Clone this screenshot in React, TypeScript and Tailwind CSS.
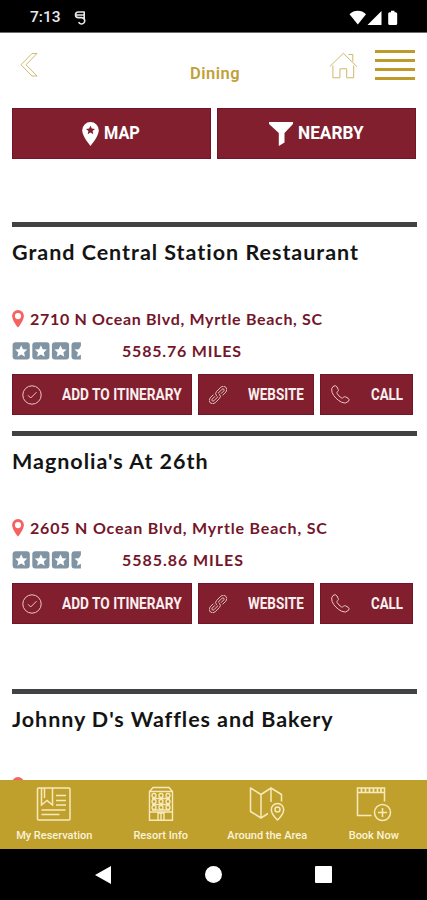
import React from 'react';

interface Place {
    name: string;
    address?: string;
    distance?: string;
    height: string;
    nameTracking: string;
    addressTracking?: string;
    distanceTracking?: string;
}

const places: Place[] = [
    {
        name: 'Grand Central Station Restaurant',
        address: '2710 N Ocean Blvd, Myrtle Beach, SC',
        distance: '5585.76 MILES',
        height: 'h-[209px]',
        nameTracking: 'tracking-[0.98px]',
        addressTracking: 'tracking-[0.68px]',
        distanceTracking: 'tracking-[0.8px]',
    },
    {
        name: "Magnolia's At 26th",
        address: '2605 N Ocean Blvd, Myrtle Beach, SC',
        distance: '5585.86 MILES',
        height: 'h-[258px]',
        nameTracking: 'tracking-[0.98px]',
        addressTracking: 'tracking-[0.82px]',
        distanceTracking: 'tracking-[0.95px]',
    },
    {
        name: "Johnny D's Waffles and Bakery",
        height: 'h-[209px]',
        nameTracking: 'tracking-[0.93px]',
    },
];

const StatusBar: React.FC = () => (
    <div className="flex h-[33px] shrink-0 items-center justify-between border-b border-[#6b6b6b] bg-black pt-[3px] pr-[29px] pl-[30px] text-[#e8e8e8]">
        <div className="flex items-center gap-[13px]">
            <span className="w-[31px] font-['Roboto',sans-serif] text-[15.5px] leading-none font-medium whitespace-nowrap">7:13</span>
            <svg width="12" height="14" viewBox="0 0 12 14" fill="none" stroke="currentColor" strokeWidth="1.6">
                <path d="M10.800 1H4.300a2.800 2.800 0 0 0 0 5.600h3.500a3.200 3.200 0 1 1-3.200 4.600M1 4h9.800M10.200 1v7M1.800 2v4" />
            </svg>
        </div>
        <svg width="50" height="16" viewBox="0 0 50 16" fill="#fff">
            <path d="M1.500 4.2C6-.4 13.500-.4 18 4.200L9.800 14.500z" />
            <path d="M33.500 1v14h-14z" />
            <path d="M43 .8h3.500v1.400h1.200q1.500 0 1.500 1.500v9.800q0 1.500-1.500 1.500h-6q-1.500 0-1.500-1.500V3.700q0-1.500 1.500-1.500H43z" />
        </svg>
    </div>
);

const Header: React.FC = () => (
    <header className="flex h-[75px] shrink-0 items-start pt-[17px] pl-[20px]">
        <svg className="mt-[2px] shrink-0" width="19" height="26" viewBox="0 0 19 26" fill="none" stroke="#cdbb74" strokeWidth="1">
            <path d="M12 1.500h5L6 12.800 17 24h-5L1 12.800z" />
        </svg>
        <h1 className="mt-[15px] ml-[151px] w-[139px] font-['Roboto',sans-serif] text-[16.5px] leading-[18px] font-semibold tracking-[0.5px] whitespace-nowrap text-[#c1a03a]">Dining</h1>
        <div className="flex gap-[17px]">
            <svg className="mt-[2px]" width="29" height="27" viewBox="0 0 29 27" fill="none" stroke="#cdb86c" strokeWidth="1">
                <path d="M.8 14.500 14.300 1.300l13.500 13.200" />
                <path d="M3.900 13.500v12.300h7v-9h6.800v9h7V13.500M19.500 2.500h4.300v7" />
            </svg>
            <div className="flex w-[40px] flex-col gap-[6px]">
                <span className="h-[3px] bg-[#bd9b2b]" />
                <span className="h-[3px] bg-[#bd9b2b]" />
                <span className="h-[3px] bg-[#bd9b2b]" />
                <span className="h-[3px] bg-[#bd9b2b]" />
            </div>
        </div>
    </header>
);

const FilterButtons: React.FC = () => (
    <div className="flex h-[51px] shrink-0 gap-[6px] pr-[11px] pl-[12px] font-['Roboto',sans-serif] text-[18.5px] font-bold text-white">
        <button className="flex w-[199px] items-center border border-[#72152a] bg-[#811f2f] pl-[69px]">
            <svg className="shrink-0" width="17" height="24" viewBox="0 0 17 24" fill="#fff">
                <path d="M8.500 0A8.300 8.300 0 0 0 .2 8.300C.2 14.500 8.500 24 8.500 24s8.300-9.500 8.300-15.700A8.300 8.300 0 0 0 8.500 0z" />
                <path fill="#811f2f" d="m8.500 3.700 1.300 2.900 3.200.3-2.400 2.200.7 3.100-2.800-1.600-2.800 1.600.7-3.100L4 6.900l3.200-.3z" />
            </svg>
            <span className="mt-px ml-[5px] origin-left scale-x-[0.88] whitespace-nowrap">MAP</span>
        </button>
        <button className="flex w-[199px] items-center border border-[#72152a] bg-[#811f2f] pl-[51px]">
            <svg className="shrink-0" width="24" height="24" viewBox="0 0 24 24" fill="#fff">
                <path d="M0 0h24v2l-8.500 9v9.500L9.800 24V11L0 2z" />
            </svg>
            <span className="mt-px ml-[5px] origin-left scale-x-[0.93] whitespace-nowrap">NEARBY</span>
        </button>
    </div>
);

const Pin: React.FC = () => (
    <svg className="shrink-0" width="12" height="18" viewBox="0 0 12 18" fill="#f5625f">
        <path fillRule="evenodd" d="M6 0a5.900 5.900 0 0 0-5.900 5.900C.1 10.500 6 17.500 6 17.500s5.900-7 5.900-11.600A5.900 5.900 0 0 0 6 0zm0 3a3 3 0 1 1 0 6.200A3 3 0 0 1 6 3z" />
    </svg>
);

const Rating: React.FC = () => (
    <svg className="shrink-0" width="70" height="18" viewBox="0 0 70 18">
        {[0, 19.7, 39.3].map((x) => (
            <g key={x} transform={`translate(${x} 0)`}>
                <rect x=".6" y=".3" width="17.200" height="17.200" rx="3" fill="#8194a4" />
                <path fill="#fff" d="m9.200 3.200 1.800 4 4.300.4-3.200 2.900.9 4.200-3.800-2.200-3.800 2.200.9-4.200-3.200-2.900 4.300-.4z" />
            </g>
        ))}
        <path fill="#8194a4" d="M62.500.3h6.400V4l-2 3.200-4.500.4 3.500 3-1 4.200 4-2v4.700h-6.400a3 3 0 0 1-3-3V3.300a3 3 0 0 1 3-3z" />
    </svg>
);

const CheckIcon: React.FC = () => (
    <svg className="shrink-0" width="20" height="20" viewBox="0 0 20 20" fill="none" stroke="#e9c9c4" strokeWidth="1">
        <circle cx="10" cy="10" r="9.200" />
        <path d="m6 10.300 2.700 2.700 5.800-5.800" />
    </svg>
);

const LinkIcon: React.FC = () => (
    <svg className="shrink-0" width="18" height="18" viewBox="0 0 18 18" fill="none" stroke="#e9c9c4" strokeWidth=".9">
        <g transform="rotate(-45 9 9)">
            <path d="M7.500 9.500V8.500a3 3 0 0 1 3-3h6a3.300 3.300 0 0 1 0 7h-4.500" />
            <path d="M10.500 8.500v1a3 3 0 0 1-3 3h-6a3.300 3.300 0 0 1 0-7H6" />
            <path d="M12 10.200h4a1.200 1.200 0 0 0 0-2.400h-5.500M6 7.800H2a1.200 1.200 0 0 0 0 2.400h5.500" />
        </g>
    </svg>
);

const PhoneIcon: React.FC = () => (
    <svg className="shrink-0" width="19" height="19" viewBox="0 0 19 19" fill="none" stroke="#e9c9c4" strokeWidth="1" strokeLinejoin="round">
        <path d="M2 1.500Q4.500-.5 6 2l1.200 2.400q.6 1.400-.7 2.300-1 .8-.4 1.800 1.500 2.700 4.400 4.400 1 .6 1.800-.5.9-1.200 2.300-.5l2.500 1.300q2 1.500.3 3.200-2.700 2.900-6.700.9Q3.700 13.600 1.100 7.500-.3 3.300 2 1.500z" />
    </svg>
);

const PlaceCard: React.FC<{ place: Place }> = ({ place }) => (
    <article className={`${place.height} flex shrink-0 flex-col`}>
        <div className="h-[5px] w-[405px] shrink-0 bg-[#414243]" />
        <h2 className={`${place.nameTracking} mt-[12px] h-[26px] shrink-0 text-[21.5px] leading-[26px] whitespace-nowrap text-[#141414]`}>{place.name}</h2>
        <div className="mt-[45px] flex h-[18px] shrink-0 items-start">
            <Pin />
            <span className={`${place.addressTracking ?? ''} ml-[6px] text-[16px] leading-[18px] whitespace-nowrap text-[#74162a]`}>{place.address}</span>
        </div>
        {place.distance && (
            <>
                <div className="mt-[14px] flex h-[18px] shrink-0 items-center">
                    <Rating />
                    <span className={`${place.distanceTracking ?? ''} ml-[40px] text-[16px] leading-[18px] whitespace-nowrap text-[#74162a]`}>{place.distance}</span>
                </div>
                <div className="mt-[14px] flex h-[41px] shrink-0 gap-[6px] font-['Roboto',sans-serif] text-[16px] font-bold text-[#fbeeee]">
                    <button className="flex w-[180px] items-center border border-[#72152a] bg-[#811f2f] pl-[9px]">
                        <CheckIcon />
                        <span className="ml-[20px] origin-left scale-x-[0.855] whitespace-nowrap">ADD TO ITINERARY</span>
                    </button>
                    <button className="flex w-[116px] items-center border border-[#72152a] bg-[#811f2f] pl-[10px]">
                        <LinkIcon />
                        <span className="ml-[21px] origin-left scale-x-[0.84] whitespace-nowrap">WEBSITE</span>
                    </button>
                    <button className="flex w-[93px] items-center border border-[#72152a] bg-[#811f2f] pl-[10px]">
                        <PhoneIcon />
                        <span className="ml-[21px] origin-left scale-x-[0.83] whitespace-nowrap">CALL</span>
                    </button>
                </div>
            </>
        )}
    </article>
);

const ReservationIcon: React.FC = () => (
    <svg width="36" height="36" viewBox="0 0 36 36" fill="none" stroke="#f7e9ba" strokeWidth="1.500">
        <rect x="1.500" y="2" width="32.500" height="32" rx="1" />
        <path d="M5.500 2v17l5.500-4.500 5.500 4.500V2M8.500 2v10M20 9.500h10M20 14.500h10M20 19h10M5.500 24h24M5.500 28.500h18" />
    </svg>
);

const ResortIcon: React.FC = () => (
    <svg width="26" height="36" viewBox="0 0 26 36" fill="none" stroke="#f7e9ba" strokeWidth="1.400">
        <path d="M1.500 34.300V5.500L5 1.500h16l3.500 4v28.800zM1.500 5.500h23M1.500 26h23M10 34v-7h6v7M13 27v7" />
        {[9.5, 15.5, 21.5].map((y) => (
            <g key={y}>
                <circle cx="6" cy={y} r="2" />
                <circle cx="13" cy={y} r="2" />
                <circle cx="20" cy={y} r="2" />
            </g>
        ))}
        <path d="M4 12.500h18M4 18.500h18M4 24h18" />
    </svg>
);

const AreaIcon: React.FC = () => (
    <svg width="36" height="36" viewBox="0 0 36 36" fill="none" stroke="#f7e9ba" strokeWidth="1.500" strokeLinejoin="round">
        <path d="M19 27.500 12 32 1.500 25.500V2L12 8.500 22 2l10.500 6.500v7M12 8.500V32M22 2v14" />
        <path d="M28.500 34s-6.200-6-6.200-10.300a6.200 6.200 0 0 1 12.400 0C34.700 28 28.500 34 28.500 34z" />
        <circle cx="28.500" cy="23.500" r="2.500" />
    </svg>
);

const BookIcon: React.FC = () => (
    <svg width="36" height="36" viewBox="0 0 36 36" fill="none" stroke="#f7e9ba" strokeWidth="1.500">
        <path d="M15.500 29.500h-14V2h27v13.500M1.500 6.500h27" />
        <path strokeWidth="1.800" d="M5.500 2v4M9.500 2v4M13.500 2v4M17.500 2v4M21.500 2v4M25 2v4" />
        <circle cx="26.500" cy="26.500" r="8" />
        <path d="M26.500 22v9M22 26.500h9" />
    </svg>
);

const tabs = [
    { label: 'My Reservation', icon: <ReservationIcon /> },
    { label: 'Resort Info', icon: <ResortIcon /> },
    { label: 'Around the Area', icon: <AreaIcon /> },
    { label: 'Book Now', icon: <BookIcon /> },
];

const App: React.FC = () => {
    return (
        <div className="flex h-[900px] w-[427px] flex-col overflow-hidden bg-white">
            <StatusBar />
            <Header />
            <FilterButtons />

            <main className="flex min-h-0 flex-1 flex-col overflow-hidden pt-[63px] pl-[12px] font-['Lato',sans-serif] font-bold">
                {places.map((place) => (
                    <PlaceCard key={place.name} place={place} />
                ))}
            </main>

            <nav className="grid h-[69px] shrink-0 grid-cols-4 bg-[#c0a02d] pt-[6px] pl-px">
                {tabs.map((tab) => (
                    <div key={tab.label} className="flex flex-col items-center">
                        {tab.icon}
                        <span className="mt-[7px] font-['Roboto',sans-serif] text-[11px] leading-[14px] font-medium whitespace-nowrap text-[#fbf3d8]">{tab.label}</span>
                    </div>
                ))}
            </nav>

            <div className="flex h-[51px] shrink-0 items-center justify-between bg-black pr-[95px] pl-[94px]">
                <svg width="18" height="20" viewBox="0 0 18 20" fill="#fff">
                    <path d="M17 1v18L1 10z" />
                </svg>
                <span className="h-[17px] w-[17px] rounded-full bg-white" />
                <span className="h-[17px] w-[17px] rounded-[1px] bg-white" />
            </div>
        </div>
    );
};

export default App;
